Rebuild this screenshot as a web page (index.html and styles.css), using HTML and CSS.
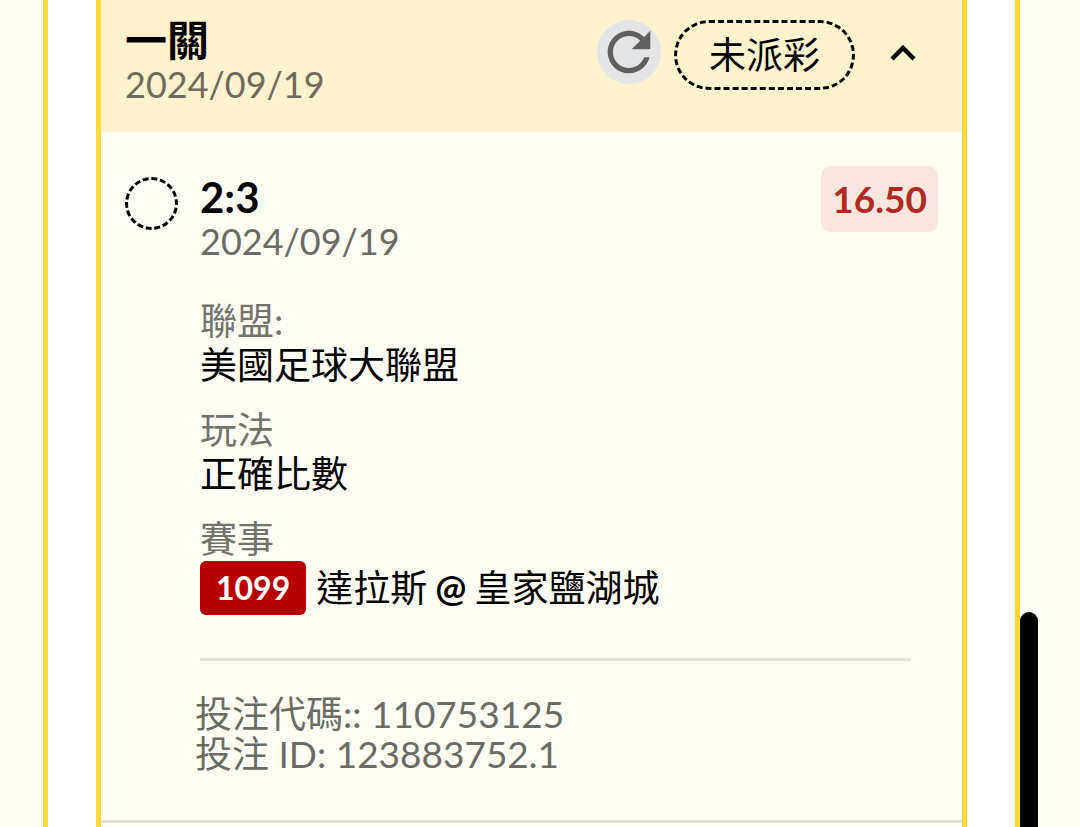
FILE: index.html
```
<!DOCTYPE html>
<html lang="zh-Hant">
<head>
    <meta charset="UTF-8">
    <meta name="viewport" content="width=device-width, initial-scale=1.0">
    <title>投注記錄</title>
    <link rel="stylesheet" href="styles.css">
</head>
<body>

    <main class="panel">
        <article class="bet-card">
            <header class="bet-header">
                <div class="bet-heading">
                    <h1 class="bet-title">一關</h1>
                    <time class="date" datetime="2024-09-19">2024/09/19</time>
                </div>
                <div class="bet-actions">
                    <button type="button" class="refresh" aria-label="重新整理">
                        <svg viewBox="0 0 24 24" width="64" height="64">
                            <path d="M17.650 6.350C16.200 4.900 14.210 4 12 4c-4.420 0-7.990 3.580-7.990 8s3.570 8 7.990 8c3.730 0 6.840-2.550 7.730-6h-2.080c-.820 2.330-3.040 4-5.650 4-3.310 0-6-2.690-6-6s2.690-6 6-6c1.660 0 3.140.690 4.220 1.780L13 11h7V4l-2.350 2.350z" fill="#606060"/>
                        </svg>
                    </button>
                    <span class="status">未派彩</span>
                    <button type="button" class="toggle" aria-label="收合">
                        <svg viewBox="0 0 28 20" width="28" height="20">
                            <path d="M3 17 L14 6 L25 17" fill="none" stroke="#000" stroke-width="4.500"/>
                        </svg>
                    </button>
                </div>
            </header>

            <section class="leg">
                <span class="ring"></span>
                <div class="leg-body">
                    <div class="leg-top">
                        <div>
                            <h2 class="score">2:3</h2>
                            <time class="date" datetime="2024-09-19">2024/09/19</time>
                        </div>
                        <span class="odds">16.50</span>
                    </div>

                    <dl class="details">
                        <div>
                            <dt>聯盟:</dt>
                            <dd>美國足球大聯盟</dd>
                        </div>
                        <div>
                            <dt>玩法</dt>
                            <dd>正確比數</dd>
                        </div>
                        <div>
                            <dt>賽事</dt>
                            <dd class="match">
                                <span class="match-no">1099</span>
                                <span>達拉斯</span>
                                <b>@</b>
                                <span>皇家鹽湖城</span>
                            </dd>
                        </div>
                    </dl>

                    <p class="codes">投注代碼:: 110753125<br>投注 ID: 123883752.1</p>
                </div>
            </section>
        </article>
    </main>
    <div class="scroll-thumb"></div>

</body>
</html>
```
FILE: styles.css
```
* {
    box-sizing: border-box;
}
body {
    margin: 0;
    padding: 0 60px 0 43px;
    background-color: #fffef5;
    color: #000;
    font-family: Lato, "Noto Sans CJK TC", sans-serif;
    font-size: 37px;
    line-height: 44px;
}
h1, h2, p, dl, dd {
    margin: 0;
}
button {
    padding: 0;
    border: 0;
    background: none;
    cursor: pointer;
}
svg {
    display: block;
}
.panel {
    display: flex;
    min-height: 100vh;
    padding: 0 48px;
    border: solid #fdd835;
    border-width: 0 5px;
    background-color: #fff;
}
.bet-card {
    flex: 1;
    border: solid #fdd835;
    border-width: 0 5px;
    background-color: #fffef5;
}
.date {
    display: block;
    color: #6b6b66;
    font-size: 36px;
}

/* header */
.bet-header {
    display: flex;
    justify-content: space-between;
    align-items: flex-start;
    padding: 18px 45px 26px 24px;
    background-color: #fff3cd;
}
.bet-header .date {
    color: #6f6a59;
}
.bet-title {
    font-size: 42px;
    line-height: 44px;
}
.bet-actions {
    display: flex;
    align-items: flex-start;
    padding-top: 2px;
}
.refresh {
    border-radius: 50%;
    background-color: #e4e5e7;
}
.status {
    margin-left: 13px;
    padding: 10px 32px;
    border: 3px dashed #000;
    border-radius: 35px;
}
.toggle {
    margin-left: 34px;
    padding: 22px 0;
}

/* selection */
.leg {
    display: flex;
    gap: 22px;
    padding: 34px 24px 46px;
    border-bottom: 3px solid #e5e2dc;
}
.ring {
    flex: none;
    width: 53px;
    height: 53px;
    margin-top: 11px;
    border: 3px dashed #000;
    border-radius: 50%;
}
.leg-body {
    flex: 1;
}
.leg-top {
    display: flex;
    justify-content: space-between;
    align-items: flex-start;
}
.score {
    padding-top: 9px;
    font-size: 42px;
    line-height: 44px;
}
.odds {
    padding: 11px;
    border-radius: 10px;
    background-color: #f7e6e0;
    color: #b02a20;
    font-weight: bold;
}
.details {
    display: flex;
    flex-direction: column;
    gap: 21px;
    margin-right: 27px;
    padding: 36px 0 43px;
    border-bottom: 3px solid #e5e2dc;
}
.details dt {
    color: #73736e;
}
.match {
    display: flex;
    align-items: center;
    gap: 8px;
}
.match-no {
    margin-right: 2px;
    padding: 5px 16px;
    border-radius: 6px;
    background-color: #b80000;
    color: #fff;
    font-size: 32px;
    font-weight: bold;
}
.codes {
    margin-left: -5px;
    padding-top: 33px;
    color: #6b6b66;
    line-height: 40px;
}

/* scrollbar thumb over the page edge */
.scroll-thumb {
    position: fixed;
    right: 42px;
    bottom: 0;
    width: 18px;
    height: 26%;
    border-radius: 9px 9px 0 0;
    background-color: #000;
}
```
